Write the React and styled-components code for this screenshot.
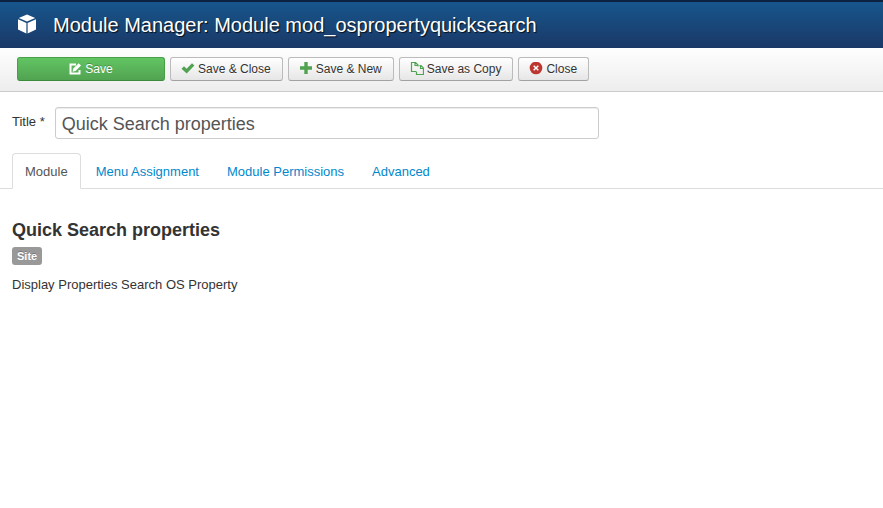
import React, { useState } from "react";
import styled, { createGlobalStyle, css } from "styled-components";

const GlobalStyle = createGlobalStyle`
  * {
    box-sizing: border-box;
  }
  body {
    margin: 0;
    background-color: white;
    color: #333;
    font-family: "Liberation Sans", Arial, sans-serif;
    font-size: 13px;
    line-height: 18px;
  }
`;

const Header = styled.header`
  display: flex;
  align-items: center;
  column-gap: 16px;
  height: 48px;
  padding: 0 17px;
  border-top: 2px solid #0b2240;
  background: linear-gradient(#17568c, #1a3867);
  color: white;
  svg {
    width: 20px;
    height: 20px;
    flex-shrink: 0;
    margin-bottom: 2px;
  }
  h1 {
    margin: 0;
    font-size: 20px;
    font-weight: normal;
    line-height: 24px;
    text-shadow: 1px 1px 1px rgba(0, 0, 0, 0.8);
  }
`;

const Toolbar = styled.div`
  display: flex;
  flex-wrap: wrap;
  gap: 5px;
  padding: 9px 17px 10px;
  border-bottom: 1px solid #ccc;
  background: linear-gradient(#fefefe, #ededed);
`;

const ToolButton = styled.button`
  display: flex;
  align-items: center;
  justify-content: center;
  column-gap: 3px;
  height: 24px;
  padding: 0 11px 0 10px;
  border: 1px solid #bbb;
  border-bottom-color: #a2a2a2;
  border-radius: 3px;
  background: linear-gradient(white, #e6e6e6);
  color: #333;
  font-family: inherit;
  font-size: 12px;
  line-height: 18px;
  text-shadow: 0 1px 1px rgba(255, 255, 255, 0.75);
  cursor: pointer;
  svg {
    width: 14px;
    height: 14px;
    flex-shrink: 0;
    color: ${(props) => props.$iconColor || "#51a351"};
  }
  ${(props) =>
    props.$primary &&
    css`
      width: 148px;
      border-color: #46a046 #46a046 #3b8a3b;
      background: linear-gradient(#62c462, #51a351);
      color: white;
      text-shadow: 0 -1px 0 rgba(0, 0, 0, 0.25);
      svg {
        color: white;
      }
    `};
`;

const TitleField = styled.div`
  display: flex;
  align-items: flex-start;
  column-gap: 10px;
  padding: 15px 12px 14px;
  label {
    padding-top: 6px;
    font-size: 13px;
  }
  input {
    flex: 1;
    min-width: 0;
    max-width: 544px;
    height: 32px;
    padding: 5px 6px 3px;
    border: 1px solid #ccc;
    border-radius: 3px;
    box-shadow: inset 0 1px 1px rgba(0, 0, 0, 0.075);
    color: #555;
    font-family: inherit;
    font-size: 18px;
  }
`;

const TabList = styled.nav`
  display: flex;
  column-gap: 2px;
  padding-left: 12px;
  border-bottom: 1px solid #ddd;
`;

const Tab = styled.a`
  margin-bottom: -1px;
  padding: 9px 12px 7px;
  border: 1px solid transparent;
  border-radius: 4px 4px 0 0;
  color: #0088cc;
  text-decoration: none;
  ${(props) =>
    props.$active &&
    css`
      border-color: #ddd #ddd white;
      background-color: white;
      color: #555;
    `};
`;

const Content = styled.main`
  padding: 29px 12px;
  h2 {
    margin: 0 0 5px;
    font-size: 18px;
    font-weight: bold;
    line-height: 24px;
  }
  p {
    margin: 11px 0 0;
  }
`;

const Label = styled.span`
  display: block;
  width: fit-content;
  padding: 2px 5px;
  border-radius: 3px;
  background-color: #999;
  color: white;
  font-size: 11px;
  font-weight: bold;
  line-height: 14px;
  text-shadow: 0 -1px 0 rgba(0, 0, 0, 0.25);
`;

const CubeIcon = () => (
  <svg viewBox="0 0 20 20" fill="currentColor" aria-hidden="true">
    <path d="M10 0.5 18.2 4 10 7.6 1.8 4Z" />
    <path d="M1 5.3 9.4 9v10.4L1 15.5Z" />
    <path d="M19 5.3 10.6 9v10.4l8.4-3.9Z" />
  </svg>
);

const EditIcon = () => (
  <svg viewBox="0 0 14 14" fill="none" aria-hidden="true">
    <path d="M8 2.5H2.5v9h9V8" stroke="currentColor" strokeWidth="2" />
    <path d="M4.5 9.8 5.3 6.6 10.7 1.2 13 3.5 7.6 8.9Z" fill="currentColor" />
  </svg>
);

const CheckIcon = () => (
  <svg viewBox="0 0 14 14" fill="currentColor" aria-hidden="true">
    <path d="M0.5 6.8 3 4.3 5.6 6.8 11 1.2 13.4 3.5 5.7 11.5Z" />
  </svg>
);

const PlusIcon = () => (
  <svg viewBox="0 0 14 14" fill="currentColor" aria-hidden="true">
    <path d="M5.3 0h3.4v4.3H13v3.4H8.7V12H5.3V7.7H1V4.3h4.3Z" />
  </svg>
);

const CopyIcon = () => (
  <svg viewBox="0 0 14 14" fill="none" stroke="currentColor" aria-hidden="true">
    <path d="M6 9.5H1.5v-9h4L8 3v1.5M5 .5v3h2.5" strokeWidth="1.2" />
    <path d="M9.5 3.5H11l2.5 2.5v6.5h-7V9.5M10.5 3.5v3h3" strokeWidth="1.2" />
  </svg>
);

const CancelIcon = () => (
  <svg viewBox="0 0 14 14" fill="none" aria-hidden="true">
    <circle cx="7" cy="6" r="6.3" fill="currentColor" />
    <path d="m4.7 3.7 4.6 4.6m0-4.6L4.7 8.3" stroke="white" strokeWidth="1.5" />
  </svg>
);

const tabs = [
  { id: "module", text: "Module" },
  { id: "assignment", text: "Menu Assignment" },
  { id: "permissions", text: "Module Permissions" },
  { id: "advanced", text: "Advanced" },
];

const App = () => {
  const [title, setTitle] = useState("Quick Search properties");
  const [activeTab, setActiveTab] = useState("module");

  return (
    <>
      <GlobalStyle />
      <Header>
        <CubeIcon />
        <h1>Module Manager: Module mod_ospropertyquicksearch</h1>
      </Header>
      <Toolbar>
        <ToolButton type="button" $primary>
          <EditIcon />
          Save
        </ToolButton>
        <ToolButton type="button">
          <CheckIcon />
          Save &amp; Close
        </ToolButton>
        <ToolButton type="button">
          <PlusIcon />
          Save &amp; New
        </ToolButton>
        <ToolButton type="button">
          <CopyIcon />
          Save as Copy
        </ToolButton>
        <ToolButton type="button" $iconColor="#bd362f">
          <CancelIcon />
          Close
        </ToolButton>
      </Toolbar>
      <TitleField>
        <label htmlFor="title">Title *</label>
        <input
          id="title"
          type="text"
          value={title}
          onChange={(e) => setTitle(e.target.value)}
        />
      </TitleField>
      <TabList>
        {tabs.map((tab) => (
          <Tab
            key={tab.id}
            href={`#${tab.id}`}
            $active={tab.id === activeTab}
            onClick={() => setActiveTab(tab.id)}
          >
            {tab.text}
          </Tab>
        ))}
      </TabList>
      <Content>
        <h2>Quick Search properties</h2>
        <Label>Site</Label>
        <p>Display Properties Search OS Property</p>
      </Content>
    </>
  );
};

export default App;
